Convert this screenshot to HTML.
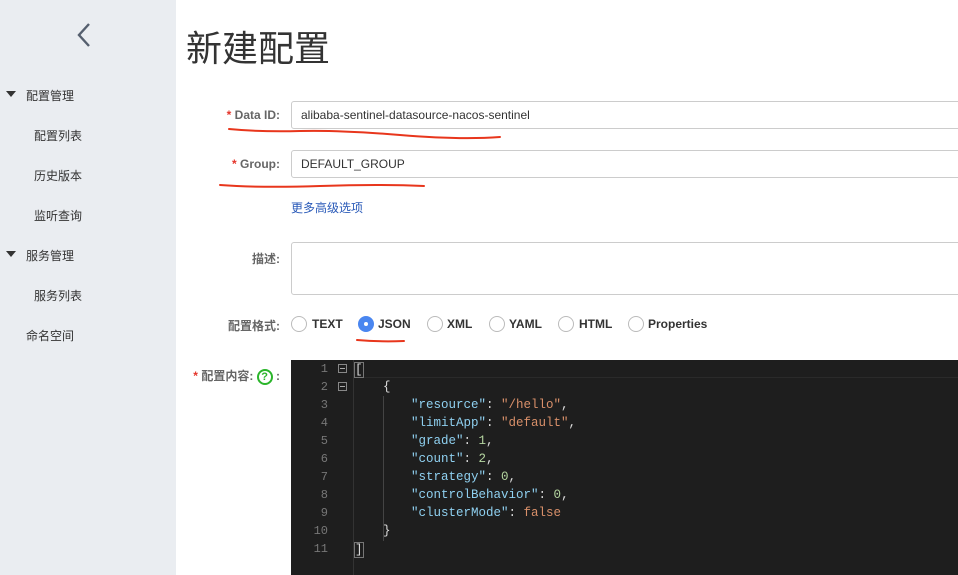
<!DOCTYPE html>
<html><head><meta charset="utf-8"><style>
*{margin:0;padding:0;box-sizing:border-box}
body{width:958px;height:575px;overflow:hidden;background:#fff;font-family:"Liberation Sans","Noto Sans CJK SC",sans-serif;position:relative;color:#333}
.side{position:absolute;left:0;top:0;width:176px;height:575px;background:#eaedf1}
.side div{position:absolute;font-size:12px;color:#333}
.abs{position:absolute}
h1{position:absolute;left:186px;top:20px;font-size:36px;font-weight:400;color:#333;font-family:"Noto Sans CJK SC",sans-serif}
.lbl{position:absolute;font-size:12px;font-weight:bold;color:#666;text-align:right}
.star{color:#e5352b}
.inp{position:absolute;left:291px;border:1px solid #ccc;border-radius:3px;font-size:12px;color:#333;padding-left:9px;background:#fff}
.radio{position:absolute;top:316px;width:16px;height:16px;border:1px solid #bbb;border-radius:50%;background:#fff}
.rt{position:absolute;top:317px;font-size:12px;font-weight:bold;color:#333}
.ed{position:absolute;left:291px;top:360px;width:667px;height:215px;background:#1e1e1e;font-family:"Liberation Mono","DejaVu Sans Mono",monospace;font-size:12.5px}
.ln{position:absolute;left:0;width:37px;text-align:right;color:#777;font-size:12px}
.cl{position:absolute;left:92px;white-space:pre;color:#ddd}
.k{color:#8fd0f0}.s{color:#d9906a}.n{color:#b5d6a0}
</style></head><body>
<div class="side">
<svg class="abs" style="left:74px;top:22px" width="20" height="26"><path d="M15 2L5 13L15 24" stroke="#555f6e" stroke-width="2.4" fill="none"/></svg>
<svg class="abs" style="left:6px;top:90px" width="10" height="8"><path d="M0 1H10L5 7Z" fill="#333"/></svg>
<div style="left:26px;top:87px">配置管理</div>
<div style="left:34px;top:127px">配置列表</div>
<div style="left:34px;top:167px">历史版本</div>
<div style="left:34px;top:207px">监听查询</div>
<svg class="abs" style="left:6px;top:250px" width="10" height="8"><path d="M0 1H10L5 7Z" fill="#333"/></svg>
<div style="left:26px;top:247px">服务管理</div>
<div style="left:34px;top:287px">服务列表</div>
<div style="left:26px;top:327px">命名空间</div>
</div>
<h1>新建配置</h1>
<div class="lbl" style="left:200px;top:108px;width:80px"><span class="star">* </span>Data ID:</div>
<div class="inp" style="top:101px;width:680px;height:28px;line-height:26px">alibaba-sentinel-datasource-nacos-sentinel</div>
<div class="lbl" style="left:200px;top:157px;width:80px"><span class="star">* </span>Group:</div>
<div class="inp" style="top:150px;width:680px;height:28px;line-height:26px">DEFAULT_GROUP</div>
<div class="abs" style="left:291px;top:199px;font-size:12px;color:#2a5ab8">更多高级选项</div>
<div class="lbl" style="left:200px;top:250px;width:80px">描述:</div>
<div class="inp" style="top:242px;width:680px;height:53px"></div>
<div class="lbl" style="left:200px;top:317px;width:80px">配置格式:</div>
<div class="radio" style="left:291px"></div><div class="rt" style="left:312px">TEXT</div>
<div class="radio" style="left:358px;border:none;background:#4a86f0"><div style="position:absolute;left:6px;top:6px;width:4px;height:4px;border-radius:50%;background:#fff"></div></div><div class="rt" style="left:378px">JSON</div>
<div class="radio" style="left:427px"></div><div class="rt" style="left:447px">XML</div>
<div class="radio" style="left:489px"></div><div class="rt" style="left:509px">YAML</div>
<div class="radio" style="left:558px"></div><div class="rt" style="left:579px">HTML</div>
<div class="radio" style="left:628px"></div><div class="rt" style="left:648px">Properties</div>
<div class="lbl" style="left:180px;top:367px;width:100px"><span class="star">* </span>配置内容: <span style="display:inline-block;width:16px;height:16px;border:2px solid #2bb52b;border-radius:50%;color:#2bb52b;font-size:11px;line-height:12px;text-align:center;vertical-align:middle">?</span> :</div>
<div class="ed">
<div class="abs" style="left:62px;top:0;width:1px;height:215px;background:#333"></div>
<div class="abs" style="left:63px;top:17px;width:604px;height:1px;background:#2a2a2a"></div>
<div class="abs" style="left:92px;top:36px;width:1px;height:145px;background:#444"></div>
<div class="abs" style="left:47px;top:4px;width:9px;height:9px;border:1px solid #888"><div style="position:absolute;left:1px;top:3px;width:5px;height:1px;background:#aaa"></div></div>
<div class="abs" style="left:47px;top:22px;width:9px;height:9px;border:1px solid #888"><div style="position:absolute;left:1px;top:3px;width:5px;height:1px;background:#aaa"></div></div>
<div class="ln" style="top:2px">1</div><div class="ln" style="top:20px">2</div><div class="ln" style="top:38px">3</div><div class="ln" style="top:56px">4</div><div class="ln" style="top:74px">5</div><div class="ln" style="top:92px">6</div><div class="ln" style="top:110px">7</div><div class="ln" style="top:128px">8</div><div class="ln" style="top:146px">9</div><div class="ln" style="top:164px">10</div><div class="ln" style="top:182px">11</div>
<div class="cl" style="left:63px;top:2px;border:1px solid #777;line-height:14px">[</div>
<div class="cl" style="top:20px">{</div>
<div class="cl" style="left:120px;top:38px"><span class="k">"resource"</span>: <span class="s">"/hello"</span>,</div>
<div class="cl" style="left:120px;top:56px"><span class="k">"limitApp"</span>: <span class="s">"default"</span>,</div>
<div class="cl" style="left:120px;top:74px"><span class="k">"grade"</span>: <span class="n">1</span>,</div>
<div class="cl" style="left:120px;top:92px"><span class="k">"count"</span>: <span class="n">2</span>,</div>
<div class="cl" style="left:120px;top:110px"><span class="k">"strategy"</span>: <span class="n">0</span>,</div>
<div class="cl" style="left:120px;top:128px"><span class="k">"controlBehavior"</span>: <span class="n">0</span>,</div>
<div class="cl" style="left:120px;top:146px"><span class="k">"clusterMode"</span>: <span class="s">false</span></div>
<div class="cl" style="top:164px">}</div>
<div class="cl" style="left:63px;top:182px;border:1px solid #777;line-height:14px">]</div>
</div>
<svg class="abs" style="left:0;top:0" width="958" height="575"><g stroke="#e8361c" stroke-width="2" fill="none" stroke-linecap="round">
<path d="M229 129Q260 132 300 131T400 135T500 137"/>
<path d="M220 185Q260 188 320 186T424 186"/>
<path d="M357 340Q380 342 404 341"/></g></svg>
</body></html>
